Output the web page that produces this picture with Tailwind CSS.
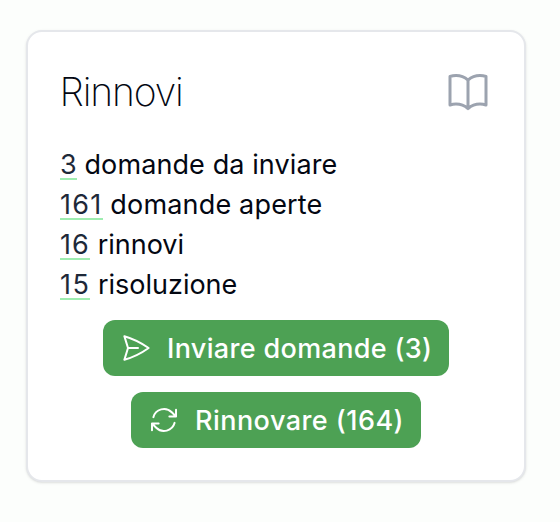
<!DOCTYPE html>
<html lang="it"><head><meta charset="utf-8"><title>Rinnovi</title>
<script src="https://cdn.jsdelivr.net/npm/@tailwindcss/browser@4"></script></head>
<body class="bg-[#fcfefc] font-['Inter',sans-serif] text-[#030712]">
<main class="h-[522px] overflow-hidden px-[26px] pt-[30px]">
<section class="h-[452px] w-[500px] rounded-2xl border-2 border-[#e5e7eb] bg-white px-8 pt-8 shadow-sm">
<header class="flex h-14 items-center justify-between">
<h1 class="-ml-[0.5px] text-[39px] leading-[56px] font-extralight tracking-[-1.15px]">Rinnovi</h1>
<svg class="size-12 text-[#9ca3af]" viewBox="0 0 24 24" fill="none" stroke="currentColor" stroke-width="1.5" stroke-linecap="round" stroke-linejoin="round"><path d="M12 6.042A8.967 8.967 0 0 0 6 3.75c-1.052 0-2.062.18-3 .512v14.25A8.987 8.987 0 0 1 6 18c2.305 0 4.408.867 6 2.292m0-14.25a8.966 8.966 0 0 1 6-2.292c1.052 0 2.062.18 3 .512v14.25A8.987 8.987 0 0 0 18 18a8.967 8.967 0 0 0-6 2.292m0-14.25v14.25"/></svg>
</header>
<ul class="mt-[25px] text-[27px] leading-10 tracking-[0.1px]">
<li class="h-10"><a class="inline-block border-b-2 border-[#9eedb0] leading-[27px] text-gray-800">3</a> domande da inviare</li>
<li class="h-10"><a class="inline-block border-b-2 border-[#9eedb0] leading-[27px] tracking-[1.3px] text-gray-800">161</a> <span class="tracking-[0.18px]">domande aperte</span></li>
<li class="h-10"><a class="inline-block border-b-2 border-[#9eedb0] leading-[27px] tracking-[1.1px] text-gray-800">16</a> <span class="tracking-normal">rinnovi</span></li>
<li class="h-10"><a class="inline-block border-b-2 border-[#9eedb0] leading-[27px] tracking-[1.4px] text-gray-800">15</a> <span class="tracking-normal">risoluzione</span></li>
</ul>
<div class="mt-[15px] flex flex-col items-center gap-4 text-[27px] font-medium text-white">
<button class="flex h-14 w-[346px] items-center rounded-xl bg-[#4da154] pl-[17px] tracking-[0.34px]"><svg class="mr-[15px] size-8" viewBox="0 0 24 24" fill="none" stroke="currentColor" stroke-width="1.5" stroke-linecap="round" stroke-linejoin="round"><path d="M6 12 3.269 3.125A59.769 59.769 0 0 1 21.485 12 59.768 59.768 0 0 1 3.27 20.875L5.999 12Zm0 0h7.5"/></svg><span class="pt-[2px]">Inviare domande (3)</span></button>
<button class="flex h-14 w-[290px] items-center rounded-xl bg-[#4da154] pl-[17px] tracking-[0.46px]"><svg class="mr-[15px] size-8" viewBox="0 0 24 24" fill="none" stroke="currentColor" stroke-width="1.5" stroke-linecap="round" stroke-linejoin="round"><path d="M16.023 9.348h4.992V4.356M2.985 19.644v-4.992h4.992m-4.993 0 3.181 3.183a8.25 8.25 0 0 0 13.803-3.7M4.031 9.865a8.25 8.25 0 0 1 13.803-3.7l3.181 3.182"/></svg><span class="pt-[2px]">Rinnovare (164)</span></button>
</div></section></main></body></html>
